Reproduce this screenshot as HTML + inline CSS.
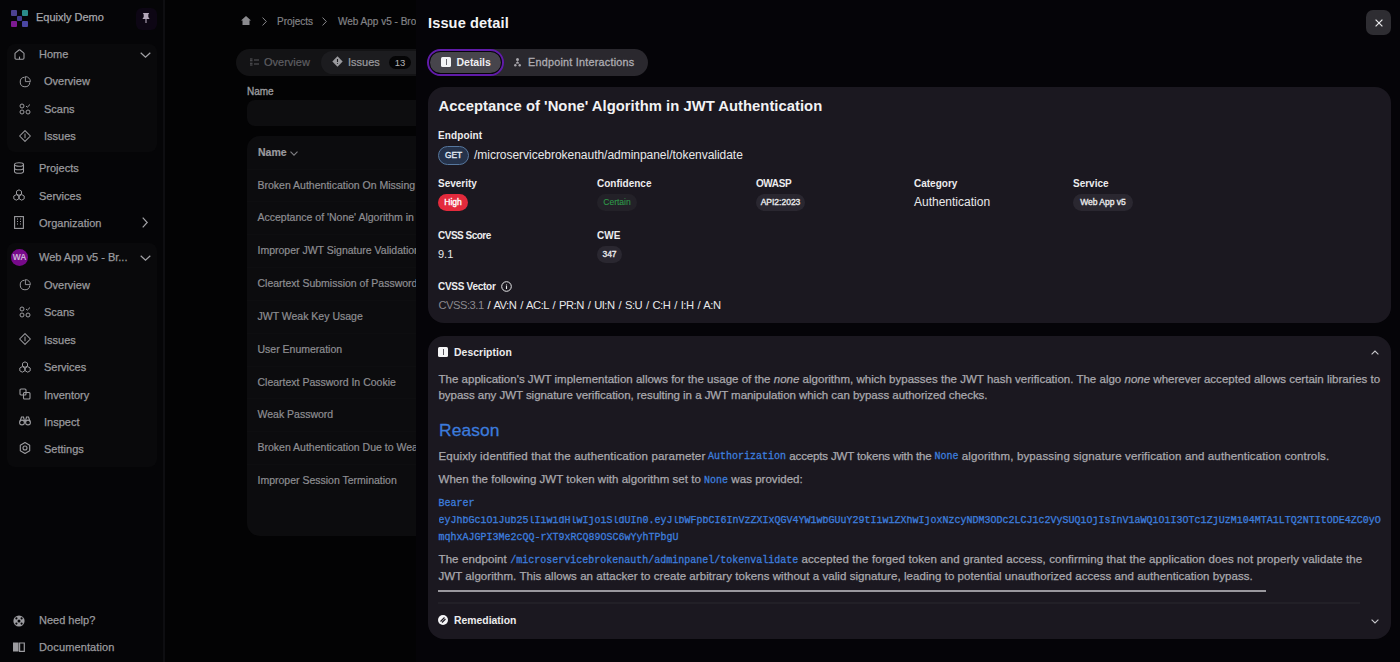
<!DOCTYPE html><html><head><meta charset="utf-8"><style>
*{box-sizing:border-box;margin:0;padding:0}
html,body{width:1400px;height:662px;overflow:hidden;background:#030304;font-family:"Liberation Sans",sans-serif}
.t{position:absolute;white-space:nowrap;line-height:1}
svg{position:absolute;overflow:visible}
#sb{position:absolute;left:0;top:0;width:165px;height:662px;background:#050507;border-right:2px solid #0e0e11}
.grp{position:absolute;left:7px;width:150px;background:#09090b;border-radius:8px}
.si{position:absolute;font-size:11px;color:#9a9a9e;white-space:nowrap;line-height:1;-webkit-text-stroke:0.25px #9a9a9e}
#main{position:absolute;left:165px;top:0;width:251px;height:662px;background:#030304;overflow:hidden}
.mt{position:absolute;font-size:10.5px;color:#8e8e92;white-space:nowrap;line-height:1;-webkit-text-stroke:0.2px currentColor}
#dr{position:absolute;left:416px;top:0;width:984px;height:662px;background:#050408}
.card{position:absolute;left:12px;width:963px;background:#1b1820;border-radius:16px}
.lbl{position:absolute;font-size:10px;font-weight:bold;color:#ececee;white-space:nowrap;line-height:1}
.val{position:absolute;font-size:12px;color:#e8e8ea;white-space:nowrap;line-height:1}
.bdg{position:absolute;height:17px;border-radius:9px;background:#2a2730;color:#e8e8ea;font-size:8.5px;line-height:17px;text-align:center;white-space:nowrap;-webkit-text-stroke:0.35px currentColor}
.p{position:absolute;font-size:11.5px;color:#aaa9ae;white-space:nowrap;line-height:1;-webkit-text-stroke:0.25px #aaa9ae}
.c{font-family:"Liberation Mono",monospace;color:#3d7ddc;font-size:10px;letter-spacing:0;-webkit-text-stroke:0.3px #3d7ddc}
</style></head><body>
<div id="sb">
<div style="position:absolute;left:11.2px;top:10.2px;width:5.6px;height:5.6px;background:#4c4290;border-radius:1px"></div>
<div style="position:absolute;left:22.4px;top:10.2px;width:5.6px;height:5.6px;background:#2a8c8a;border-radius:1px"></div>
<div style="position:absolute;left:16.8px;top:15.8px;width:5.6px;height:5.6px;background:#403c8e;border-radius:1px"></div>
<div style="position:absolute;left:11.2px;top:21.4px;width:5.6px;height:5.6px;background:#7c1a92;border-radius:1px"></div>
<div style="position:absolute;left:22.4px;top:21.4px;width:5.6px;height:5.6px;background:#4a46a2;border-radius:1px"></div>
<div class="si" style="left:36px;top:12px;font-size:11px;color:#b0b0b4">Equixly Demo</div>
<div style="position:absolute;left:136px;top:8px;width:21px;height:22px;border-radius:6px;background:#0d0614"></div>
<svg style="left:142px;top:13px" width="8" height="10" viewBox="0 0 8 10"><path d="M0.8 0H7.2L6.3 1.5V4L7.6 6H0.4L1.7 4V1.5Z" fill="#b4a8ba"/><path d="M4 6V10" stroke="#b4a8ba" stroke-width="1.1"/></svg>
<div class="grp" style="top:44px;height:108px"></div>
<div class="grp" style="top:243px;height:224px"></div>
<svg style="left:13.8px;top:49px" width="11" height="11" viewBox="0 0 11 11"><path d="M1 4.6Q1 4.2 1.4 3.9L5 1Q5.5 0.6 6 1L9.6 3.9Q10 4.2 10 4.6V9Q10 10.2 8.8 10.2H2.2Q1 10.2 1 9Z" stroke="#9c9ca0" stroke-width="1.1" fill="none"/><path d="M5.5 7.6V10.2" stroke="#9c9ca0" stroke-width="1.1"/></svg>
<div class="si" style="left:39px;top:49px">Home</div>
<svg style="left:140px;top:52px" width="11" height="6" viewBox="0 0 11 6"><path d="M0.7 0.7L5.5 5.2L10.3 0.7" stroke="#a3a3a7" stroke-width="1.2" fill="none"/></svg>
<svg style="left:18.5px;top:75.5px" width="12" height="12" viewBox="0 0 12 12"><path d="M5.6 1.2A4.8 4.8 0 1 0 10.8 6.4" stroke="#9c9ca0" stroke-width="1" fill="none"/><path d="M6.4 0.6V5.6H11.4A5 5 0 0 0 6.4 0.6Z" stroke="#9c9ca0" stroke-width="0.9" fill="none" stroke-linejoin="round"/></svg>
<div class="si" style="left:44px;top:76px">Overview</div>
<svg style="left:19px;top:103px" width="12" height="12" viewBox="0 0 12 12"><circle cx="3" cy="3" r="2" stroke="#9c9ca0" stroke-width="1" fill="none"/><circle cx="3" cy="9" r="2" stroke="#9c9ca0" stroke-width="1" fill="none"/><circle cx="9" cy="9" r="2" stroke="#9c9ca0" stroke-width="1" fill="none"/><path d="M7 3L8.3 4.2L11 1.5" stroke="#9c9ca0" stroke-width="1" fill="none"/></svg>
<div class="si" style="left:44px;top:104px">Scans</div>
<svg style="left:19px;top:130px" width="12" height="12" viewBox="0 0 12 12"><path d="M6 0.6L11.4 6L6 11.4L0.6 6Z" stroke="#9c9ca0" stroke-width="1.05" fill="none" stroke-linejoin="round"/><path d="M6 3.6V8.2" stroke="#9c9ca0" stroke-width="1"/></svg>
<div class="si" style="left:44px;top:131px">Issues</div>
<svg style="left:13px;top:162px" width="12" height="12" viewBox="0 0 12 12"><ellipse cx="6" cy="2.5" rx="4.5" ry="1.8" stroke="#9c9ca0" stroke-width="1.1" fill="none"/><path d="M1.5 2.5V9.5C1.5 10.5 3.5 11.3 6 11.3S10.5 10.5 10.5 9.5V2.5M1.5 6C1.5 7 3.5 7.8 6 7.8S10.5 7 10.5 6" stroke="#9c9ca0" stroke-width="1.1" fill="none"/></svg>
<div class="si" style="left:39px;top:163px">Projects</div>
<svg style="left:13px;top:189px" width="12" height="12" viewBox="0 0 12 12"><path d="M6 0.8L8.5 2.2V5L6 6.4L3.5 5V2.2Z M3.3 5.6L5.8 7V9.8L3.3 11.2L0.8 9.8V7Z M8.7 5.6L11.2 7V9.8L8.7 11.2L6.2 9.8V7Z" stroke="#9c9ca0" stroke-width="1" fill="none"/></svg>
<div class="si" style="left:39px;top:191px">Services</div>
<svg style="left:14px;top:216px" width="10" height="13" viewBox="0 0 10 13"><rect x="0.6" y="0.6" width="8.8" height="11.8" stroke="#9c9ca0" stroke-width="1.1" fill="none"/><path d="M3 3h1M6 3h1M3 5.5h1M6 5.5h1M3 8h1M6 8h1" stroke="#9c9ca0" stroke-width="1.1"/></svg>
<div class="si" style="left:39px;top:218px">Organization</div>
<svg style="left:142px;top:217px" width="6" height="11" viewBox="0 0 6 11"><path d="M0.7 0.7L5.2 5.5L0.7 10.3" stroke="#a3a3a7" stroke-width="1.2" fill="none"/></svg>
<div style="position:absolute;left:11px;top:248.5px;width:17px;height:17px;border-radius:50%;background:#760a8a;color:#cdb0d6;font-size:8.5px;font-weight:bold;line-height:17px;text-align:center;letter-spacing:-0.2px">WA</div>
<div class="si" style="left:39px;top:252px">Web App v5 - Br...</div>
<svg style="left:140px;top:255px" width="11" height="6" viewBox="0 0 11 6"><path d="M0.7 0.7L5.5 5.2L10.3 0.7" stroke="#a3a3a7" stroke-width="1.2" fill="none"/></svg>
<svg style="left:18.5px;top:278.5px" width="12" height="12" viewBox="0 0 12 12"><path d="M5.6 1.2A4.8 4.8 0 1 0 10.8 6.4" stroke="#9c9ca0" stroke-width="1" fill="none"/><path d="M6.4 0.6V5.6H11.4A5 5 0 0 0 6.4 0.6Z" stroke="#9c9ca0" stroke-width="0.9" fill="none" stroke-linejoin="round"/></svg>
<div class="si" style="left:44px;top:280px">Overview</div>
<svg style="left:19px;top:306px" width="12" height="12" viewBox="0 0 12 12"><circle cx="3" cy="3" r="2" stroke="#9c9ca0" stroke-width="1" fill="none"/><circle cx="3" cy="9" r="2" stroke="#9c9ca0" stroke-width="1" fill="none"/><circle cx="9" cy="9" r="2" stroke="#9c9ca0" stroke-width="1" fill="none"/><path d="M7 3L8.3 4.2L11 1.5" stroke="#9c9ca0" stroke-width="1" fill="none"/></svg>
<div class="si" style="left:44px;top:307px">Scans</div>
<svg style="left:19px;top:333px" width="12" height="12" viewBox="0 0 12 12"><path d="M6 0.6L11.4 6L6 11.4L0.6 6Z" stroke="#9c9ca0" stroke-width="1.05" fill="none" stroke-linejoin="round"/><path d="M6 3.6V8.2" stroke="#9c9ca0" stroke-width="1"/></svg>
<div class="si" style="left:44px;top:335px">Issues</div>
<svg style="left:19px;top:361px" width="12" height="12" viewBox="0 0 12 12"><path d="M6 0.8L8.5 2.2V5L6 6.4L3.5 5V2.2Z M3.3 5.6L5.8 7V9.8L3.3 11.2L0.8 9.8V7Z M8.7 5.6L11.2 7V9.8L8.7 11.2L6.2 9.8V7Z" stroke="#9c9ca0" stroke-width="1" fill="none"/></svg>
<div class="si" style="left:44px;top:362px">Services</div>
<svg style="left:19px;top:388px" width="12" height="12" viewBox="0 0 12 12"><rect x="1" y="1" width="6" height="6" rx="1" stroke="#9c9ca0" stroke-width="1.1" fill="none"/><rect x="4.5" y="4.5" width="6.5" height="6.5" rx="1" stroke="#9c9ca0" stroke-width="1.1" fill="none"/></svg>
<div class="si" style="left:44px;top:390px">Inventory</div>
<svg style="left:19px;top:416px" width="12" height="10" viewBox="0 0 12 10"><circle cx="3" cy="6.5" r="2.4" stroke="#9c9ca0" stroke-width="1.1" fill="none"/><circle cx="9" cy="6.5" r="2.4" stroke="#9c9ca0" stroke-width="1.1" fill="none"/><path d="M1 5.5L2.5 1H4.5L5.5 5M11 5.5L9.5 1H7.5L6.5 5M5.4 5.5H6.6" stroke="#9c9ca0" stroke-width="1.1" fill="none"/></svg>
<div class="si" style="left:44px;top:417px">Inspect</div>
<svg style="left:19px;top:442px" width="12" height="12" viewBox="0 0 12 12"><path d="M6 0.6L10.7 3.3V8.7L6 11.4L1.3 8.7V3.3Z" stroke="#9c9ca0" stroke-width="1.1" fill="none" stroke-linejoin="round"/><circle cx="6" cy="6" r="2" stroke="#9c9ca0" stroke-width="1.1" fill="none"/></svg>
<div class="si" style="left:44px;top:444px">Settings</div>
<svg style="left:13px;top:615px" width="12" height="12" viewBox="0 0 12 12"><circle cx="6" cy="6" r="5.6" fill="#9c9ca0"/><circle cx="6" cy="6" r="1.5" fill="#050507"/><circle cx="3.4" cy="3.4" r="1.1" fill="#050507"/><circle cx="8.6" cy="3.4" r="1.1" fill="#050507"/><circle cx="3.4" cy="8.6" r="1.1" fill="#050507"/><circle cx="8.6" cy="8.6" r="1.1" fill="#050507"/></svg>
<div class="si" style="left:39px;top:615px">Need help?</div>
<svg style="left:13px;top:642px" width="12" height="10" viewBox="0 0 12 10"><path d="M0 0.5H5.6V9.5H0Z" fill="#9c9ca0"/><path d="M6.6 1H11.3V9.3H6.6Z" stroke="#9c9ca0" stroke-width="1.2" fill="none"/></svg>
<div class="si" style="left:39px;top:642px;letter-spacing:0.12px">Documentation</div>
</div>
<div id="main">
<svg style="left:76px;top:16px" width="10" height="9" viewBox="0 0 10 9"><path d="M5 0L10 4.5H8.5V9H1.5V4.5H0Z" fill="#8a8a8e"/></svg>
<svg style="left:97px;top:17px" width="5" height="9" viewBox="0 0 6 11" preserveAspectRatio="none"><path d="M0.7 0.7L5.2 5.5L0.7 10.3" stroke="#8a8a8e" stroke-width="1.2" fill="none"/></svg>
<div class="mt" style="left:112px;top:17px;font-size:10px;color:#828286">Projects</div>
<svg style="left:157px;top:17px" width="5" height="9" viewBox="0 0 6 11" preserveAspectRatio="none"><path d="M0.7 0.7L5.2 5.5L0.7 10.3" stroke="#8a8a8e" stroke-width="1.2" fill="none"/></svg>
<div class="mt" style="left:173px;top:17px;font-size:10px;color:#828286">Web App v5 - Broken Auth</div>
<div style="position:absolute;left:71px;top:49px;width:300px;height:27px;border-radius:14px;background:#131315"></div>
<div style="position:absolute;left:156px;top:51px;width:200px;height:23px;border-radius:12px;background:#1c1c1f"></div>
<svg style="left:84.5px;top:58px" width="9" height="8" viewBox="0 0 9 8"><path d="M0 1h2.5M0 2.8h2.5M4 2h5M0 5.2h2.5M0 7h2.5M4 6h5" stroke="#5a5a5e" stroke-width="1.1"/></svg>
<div class="mt" style="left:99px;top:57px;color:#5e5e62;font-size:11px">Overview</div>
<svg style="left:167px;top:56px" width="11" height="11" viewBox="0 0 11 11"><path d="M5.5 0.3L10.7 5.5L5.5 10.7L0.3 5.5Z" fill="#9a9a9e"/><path d="M5.5 3V6M5.5 7.3V8" stroke="#1c1c1f" stroke-width="1.1"/></svg>
<div class="mt" style="left:183px;top:57px;color:#9c9ca0;font-size:11px">Issues</div>
<div style="position:absolute;left:224px;top:56px;width:22px;height:13px;border-radius:7px;background:#050506;color:#b4b4b8;font-size:9.5px;line-height:13px;text-align:center">13</div>
<div class="mt" style="left:82px;top:87px;color:#9a9a9e;font-size:10px;-webkit-text-stroke:0.35px #9a9a9e">Name</div>
<div style="position:absolute;left:82px;top:100px;width:300px;height:26px;border-radius:8px;background:#0d0d0f"></div>
<div style="position:absolute;left:82px;top:136px;width:300px;height:400px;border-radius:13px;background:#0c0c0e"></div>
<div class="mt" style="left:93px;top:147px;font-weight:bold;color:#9a9a9e">Name</div>
<svg style="left:125px;top:151px" width="8" height="5" viewBox="0 0 8 5"><path d="M0.5 0.7L4 4.2L7.5 0.7" stroke="#808084" stroke-width="1.1" fill="none"/></svg>
<div style="position:absolute;left:82px;top:168.5px;width:300px;height:1px;background:#0e0e10"></div>
<div class="mt" style="left:92.5px;top:180px">Broken Authentication On Missing Authorization</div>
<div style="position:absolute;left:82px;top:200.5px;width:300px;height:1px;background:#0e0e10"></div>
<div class="mt" style="left:92.5px;top:212px">Acceptance of &#x27;None&#x27; Algorithm in JWT</div>
<div style="position:absolute;left:82px;top:233.5px;width:300px;height:1px;background:#0e0e10"></div>
<div class="mt" style="left:92.5px;top:245px">Improper JWT Signature Validation</div>
<div style="position:absolute;left:82px;top:266.5px;width:300px;height:1px;background:#0e0e10"></div>
<div class="mt" style="left:92.5px;top:278px">Cleartext Submission of Password</div>
<div style="position:absolute;left:82px;top:299.5px;width:300px;height:1px;background:#0e0e10"></div>
<div class="mt" style="left:92.5px;top:311px">JWT Weak Key Usage</div>
<div style="position:absolute;left:82px;top:332.5px;width:300px;height:1px;background:#0e0e10"></div>
<div class="mt" style="left:92.5px;top:344px">User Enumeration</div>
<div style="position:absolute;left:82px;top:365.5px;width:300px;height:1px;background:#0e0e10"></div>
<div class="mt" style="left:92.5px;top:377px">Cleartext Password In Cookie</div>
<div style="position:absolute;left:82px;top:397.5px;width:300px;height:1px;background:#0e0e10"></div>
<div class="mt" style="left:92.5px;top:409px">Weak Password</div>
<div style="position:absolute;left:82px;top:430.5px;width:300px;height:1px;background:#0e0e10"></div>
<div class="mt" style="left:92.5px;top:442px">Broken Authentication Due to Weak</div>
<div style="position:absolute;left:82px;top:463.5px;width:300px;height:1px;background:#0e0e10"></div>
<div class="mt" style="left:92.5px;top:475px">Improper Session Termination</div>
</div>
<div id="dr">
<div class="t" id="ttl" style="letter-spacing:0.109px;left:12px;top:16px;font-size:14.6px;font-weight:bold;color:#f4f4f6">Issue detail</div>
<div style="position:absolute;left:950px;top:10px;width:25px;height:25px;border-radius:7px;background:#2e2d32"></div>
<svg style="left:958.5px;top:18.5px" width="8" height="8" viewBox="0 0 8 8"><path d="M0.6 0.6L7.4 7.4M7.4 0.6L0.6 7.4" stroke="#e8e8ea" stroke-width="1.2"/></svg>
<div style="position:absolute;left:12px;top:49px;width:220px;height:27px;border-radius:14px;background:#2a282e"></div>
<div style="position:absolute;left:11px;top:48.5px;width:77px;height:27.5px;border-radius:14px;border:2px solid #601ba8;background:#050408"></div>
<div style="position:absolute;left:14px;top:51.5px;width:71px;height:21.5px;border-radius:11px;background:#47454c"></div>
<div style="position:absolute;left:25px;top:57px;width:10px;height:10px;border-radius:1.5px;background:#f4f4f6"></div>
<div style="position:absolute;left:29.5px;top:59px;width:1.2px;height:6px;background:#6a6870"></div>
<div class="t" id="det" style="letter-spacing:-0.021px;left:40.5px;top:57px;font-size:10.5px;font-weight:bold;color:#f0f0f2">Details</div>
<svg style="left:97.5px;top:57.5px" width="7" height="8.5" viewBox="0 0 7 8.5"><circle cx="3.5" cy="1.6" r="1.5" fill="#a8a6ac"/><path d="M2.2 5.2L3.5 3.6L4.8 5.2Z" fill="#a8a6ac" stroke="#a8a6ac" stroke-width="0.8"/><circle cx="1.3" cy="7.2" r="1.2" fill="#a8a6ac"/><circle cx="5.7" cy="7.2" r="1.2" fill="#a8a6ac"/></svg>
<div class="t" id="ei" style="letter-spacing:0.241px;left:112px;top:57px;font-size:10.8px;color:#aeacb2;-webkit-text-stroke:0.3px #aeacb2">Endpoint Interactions</div>
<div class="card" style="top:87px;height:236px"></div>
<div class="t" id="tit" style="letter-spacing:0.024px;left:22.5px;top:99px;font-size:14.8px;font-weight:bold;color:#f2f2f4">Acceptance of 'None' Algorithm in JWT Authentication</div>
<div class="lbl" id="lep" style="letter-spacing:0.108px;left:22px;top:131px">Endpoint</div>
<div style="position:absolute;left:22px;top:146px;width:31px;height:18.5px;border-radius:9.5px;background:#25324a;border:1px solid #56779e;color:#dfe6f0;font-size:8.3px;line-height:16.5px;text-align:center;-webkit-text-stroke:0.4px #dfe6f0">GET</div>
<div class="val" id="path" style="letter-spacing:-0.028px;left:58px;top:149px">/microservicebrokenauth/adminpanel/tokenvalidate</div>
<div class="lbl" style="left:22px;top:179px">Severity</div>
<div class="lbl" style="left:181px;top:179px">Confidence</div>
<div class="lbl" id="owasp" style="letter-spacing:-0.406px;left:340px;top:179px">OWASP</div>
<div class="lbl" style="left:498px;top:179px">Category</div>
<div class="lbl" style="left:657px;top:179px">Service</div>
<div class="bdg" style="left:22px;top:194px;width:30px;background:#e42a3c;color:#fff">High</div>
<div class="bdg" style="left:181px;top:194px;width:40px;background:#232128;color:#2f9a4a;-webkit-text-stroke:0.1px #2f9a4a">Certain</div>
<div class="bdg" style="left:340px;top:194px;width:49px">API2:2023</div>
<div class="val" style="left:498px;top:196px">Authentication</div>
<div class="bdg" style="left:657px;top:194px;width:60px">Web App v5</div>
<div class="lbl" id="lcs" style="letter-spacing:-0.501px;left:22px;top:231px">CVSS Score</div>
<div class="val" style="left:22px;top:249px;font-size:11px">9.1</div>
<div class="lbl" style="left:181px;top:231px">CWE</div>
<div class="bdg" style="left:181px;top:246px;width:25px">347</div>
<div class="lbl" id="lcv" style="letter-spacing:-0.281px;left:22px;top:282px">CVSS Vector</div>
<svg style="left:84.5px;top:281px" width="11" height="11" viewBox="0 0 11 11"><circle cx="5.5" cy="5.5" r="4.8" stroke="#e8e8ea" stroke-width="1" fill="none"/><path d="M5.5 4.6V8M5.5 3V3.6" stroke="#e8e8ea" stroke-width="1.1"/></svg>
<div class="val" style="letter-spacing:-0.5px;word-spacing:1.3px;left:22.5px;top:300px;font-size:11.2px"><span style="color:#8a888e">CVSS:3.1</span> / AV:N / AC:L / PR:N / UI:N / S:U / C:H / I:H / A:N</div>
<div class="card" style="top:336px;height:303px"></div>
<div style="position:absolute;left:22px;top:347px;width:10px;height:10px;border-radius:1.5px;background:#f4f4f6"></div>
<div style="position:absolute;left:26.5px;top:349px;width:1.2px;height:6px;background:#5a5860"></div>
<div class="lbl" id="ldesc" style="letter-spacing:0.058px;left:38px;top:348px;font-size:10.4px">Description</div>
<svg style="left:954.5px;top:350px" width="8" height="5" viewBox="0 0 8 5"><path d="M0.6 4.4L4 1L7.4 4.4" stroke="#c8c8cc" stroke-width="1.1" fill="none"/></svg>
<div class="p" id="p1" style="letter-spacing:0.013px;left:22.5px;top:374px">The application's JWT implementation allows for the usage of the <i>none</i> algorithm, which bypasses the JWT hash verification. The algo <i>none</i> wherever accepted allows certain libraries to</div>
<div class="p" id="p2" style="letter-spacing:-0.039px;left:22.5px;top:390px">bypass any JWT signature verification, resulting in a JWT manipulation which can bypass authorized checks.</div>
<div class="t" id="rsn" style="letter-spacing:0.091px;left:23px;top:422px;font-size:17.4px;color:#3c7bdc;-webkit-text-stroke:0.3px #3c7bdc">Reason</div>
<div class="p" id="p3a" style="letter-spacing:0.166px;left:22.5px;top:451px">Equixly identified that the authentication parameter</div>
<div class="p c" style="left:292px;top:452px">Authorization</div>
<div class="p" id="p3b" style="letter-spacing:-0.147px;left:373.29999999999995px;top:451px">accepts JWT tokens with the</div>
<div class="p c" style="left:518.6px;top:452px">None</div>
<div class="p" id="p3c" style="letter-spacing:0.132px;left:545.8px;top:451px">algorithm, bypassing signature verification and authentication controls.</div>
<div class="p" id="p4" style="letter-spacing:0.036px;left:22.5px;top:474px">When the following JWT token with algorithm set to <span class="c">None</span> was provided:</div>
<div class="p c" style="left:22.5px;top:499px">Bearer</div>
<div style="position:absolute;left:22.5px;top:516px;width:942px;height:14px;overflow:hidden"><div class="p c" style="position:relative">eyJhbGciOiJub25lIiwidHlwIjoiSldUIn0.eyJlbWFpbCI6InVzZXIxQGV4YW1wbGUuY29tIiwiZXhwIjoxNzcyNDM3ODc2LCJ1c2VySUQiOjIsInV1aWQiOiI3OTc1ZjUzMi04MTA1LTQ2NTItODE4ZC0yOGQ</div></div>
<div class="p c" style="left:22.5px;top:533px">mqhxAJGPI3Me2cQQ-rXT9xRCQ89OSC6wYyhTPbgU</div>
<div class="p" id="p5" style="letter-spacing:0.102px;left:22.5px;top:554px">The endpoint <span class="c">/microservicebrokenauth/adminpanel/tokenvalidate</span> accepted the forged token and granted access, confirming that the application does not properly validate the</div>
<div class="p" id="p6" style="letter-spacing:0.054px;left:22.5px;top:571px">JWT algorithm. This allows an attacker to create arbitrary tokens without a valid signature, leading to potential unauthorized access and authentication bypass.</div>
<div style="position:absolute;left:22px;top:589.5px;width:828px;height:2px;background:#9a989e"></div>
<div style="position:absolute;left:22px;top:602px;width:922px;height:1.5px;background:#222027"></div>
<svg style="left:22px;top:615px" width="10" height="10" viewBox="0 0 10 10"><circle cx="5" cy="5" r="5" fill="#f4f4f6"/><path d="M2.5 6.5L6.5 2.5M4 7.5L7.5 4" stroke="#1b1820" stroke-width="1.1"/></svg>
<div class="lbl" style="left:38px;top:616px;font-size:10.4px">Remediation</div>
<svg style="left:954.5px;top:619px" width="8" height="5" viewBox="0 0 8 5"><path d="M0.6 0.6L4 4L7.4 0.6" stroke="#c8c8cc" stroke-width="1.1" fill="none"/></svg>
</div>
</body></html>
